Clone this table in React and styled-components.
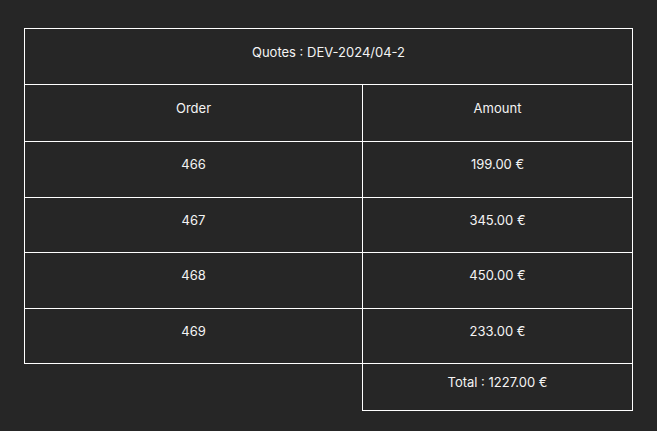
import React from "react";
import styled, { createGlobalStyle } from "styled-components";

const Global = createGlobalStyle`
  html, body { margin: 0; padding: 0; background: #262626; }
  body { font-family: Inter, "Noto Sans", sans-serif; color: #f4f4f4; }
`;

const Page = styled.div`
  padding: 28px 24px;
  background: #262626;
  min-height: 431px;
  box-sizing: border-box;
`;

const Table = styled.table`
  width: 608px;
  border-collapse: collapse;
  table-layout: fixed;
  font-size: 13px;
  line-height: 16px;
`;

const Col = styled.col`
  width: ${(p) => p.$w}px;
`;

const Cell = styled.td`
  border: 1px solid #ffffff;
  text-align: center;
  vertical-align: middle;
  padding: 0 0 10px 0;
  height: ${(p) => p.$h}px;
  box-sizing: border-box;
`;

const HeadCell = styled(Cell).attrs({ as: "th" })`
  font-weight: 400;
`;

const Blank = styled.td`
  border: none;
  border-top: 1px solid #ffffff;
  padding: 0;
`;

const rows = [
  ["466", "199.00 €"],
  ["467", "345.00 €"],
  ["468", "450.00 €"],
  ["469", "233.00 €"],
];

export default function App() {
  return (
    <Page>
      <Global />
      <Table>
        <colgroup>
          <Col $w={338} />
          <Col $w={270} />
        </colgroup>
        <thead>
          <tr>
            <HeadCell colSpan={2} $h={56}>
              Quotes : DEV-2024/04-2
            </HeadCell>
          </tr>
          <tr>
            <HeadCell $h={57}>Order</HeadCell>
            <HeadCell $h={57}>Amount</HeadCell>
          </tr>
        </thead>
        <tbody>
          {rows.map(([o, a]) => (
            <tr key={o}>
              <Cell $h={55.5}>{o}</Cell>
              <Cell $h={55.5}>{a}</Cell>
            </tr>
          ))}
        </tbody>
        <tfoot>
          <tr>
            <Blank />
            <Cell $h={47}>Total : 1227.00 €</Cell>
          </tr>
        </tfoot>
      </Table>
    </Page>
  );
}
